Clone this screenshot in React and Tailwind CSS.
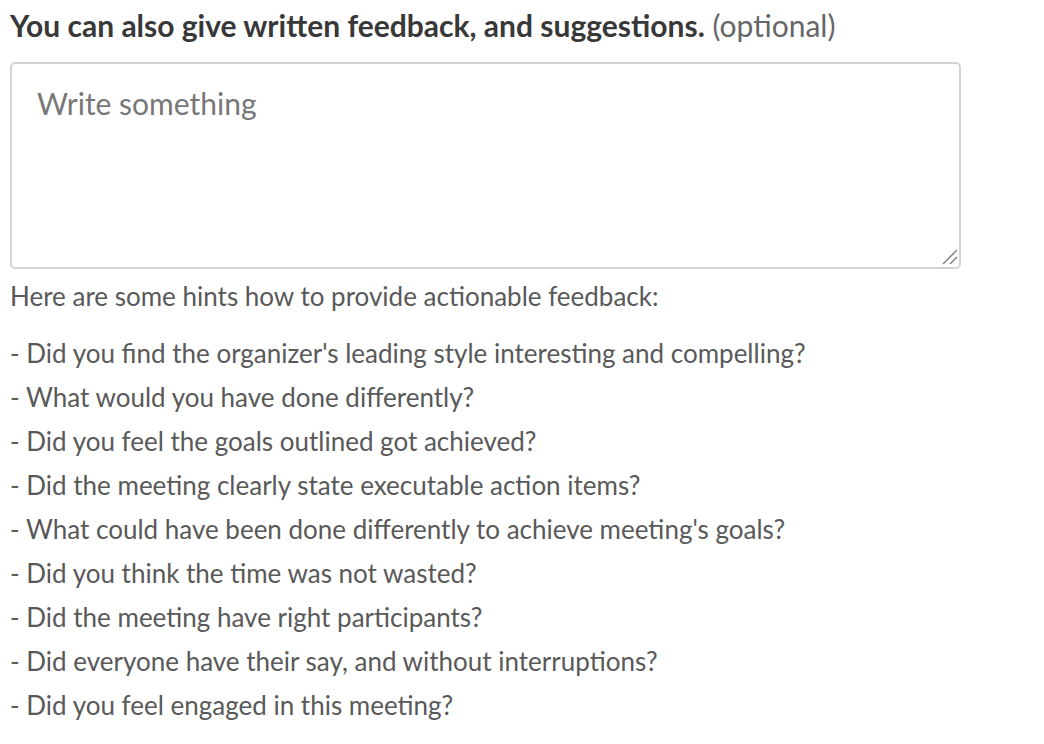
import React from 'react';

const hints = [
  "- Did you find the organizer's leading style interesting and compelling?",
  '- What would you have done differently?',
  '- Did you feel the goals outlined got achieved?',
  '- Did the meeting clearly state executable action items?',
  "- What could have been done differently to achieve meeting's goals?",
  '- Did you think the time was not wasted?',
  '- Did the meeting have right participants?',
  '- Did everyone have their say, and without interruptions?',
  '- Did you feel engaged in this meeting?',
];

export default function App() {
  return (
    <div className="min-h-screen bg-white pl-[10px] pt-[8px] font-['Lato',sans-serif]">
      <div className="w-[951px]">
        <p className="text-[30px] leading-[34px] text-[#383838] whitespace-nowrap">
          <span className="font-bold">You can also give written feedback, and suggestions.</span>{' '}
          <span className="text-[#666]">(optional)</span>
        </p>

        <div className="relative mt-[20px]">
          <textarea
            placeholder="Write something"
            className="block h-[207px] w-full resize-none rounded-[5px] border-2 border-[#d3d3d3] px-[25px] py-[21px] text-[30px] leading-[36px] text-[#333] placeholder:text-[#777] outline-none"
          />
          <svg className="pointer-events-none absolute bottom-[4px] right-[3px]" width="17" height="17" viewBox="0 0 17 17">
            <line x1="2" y1="16" x2="16" y2="2" stroke="#888" strokeWidth="1.6" />
            <line x1="9" y1="16" x2="16" y2="9" stroke="#888" strokeWidth="1.6" />
          </svg>
        </div>

        <p className="mt-[12px] text-[26px] leading-[30px] text-[#595959] whitespace-nowrap">
          Here are some hints how to provide actionable feedback:
        </p>

        <ul className="mt-[20px] text-[26px] leading-[44px] text-[#595959]">
          {hints.map((h, i) => (
            <li key={i} className="whitespace-nowrap">{h}</li>
          ))}
        </ul>
      </div>
    </div>
  );
}
